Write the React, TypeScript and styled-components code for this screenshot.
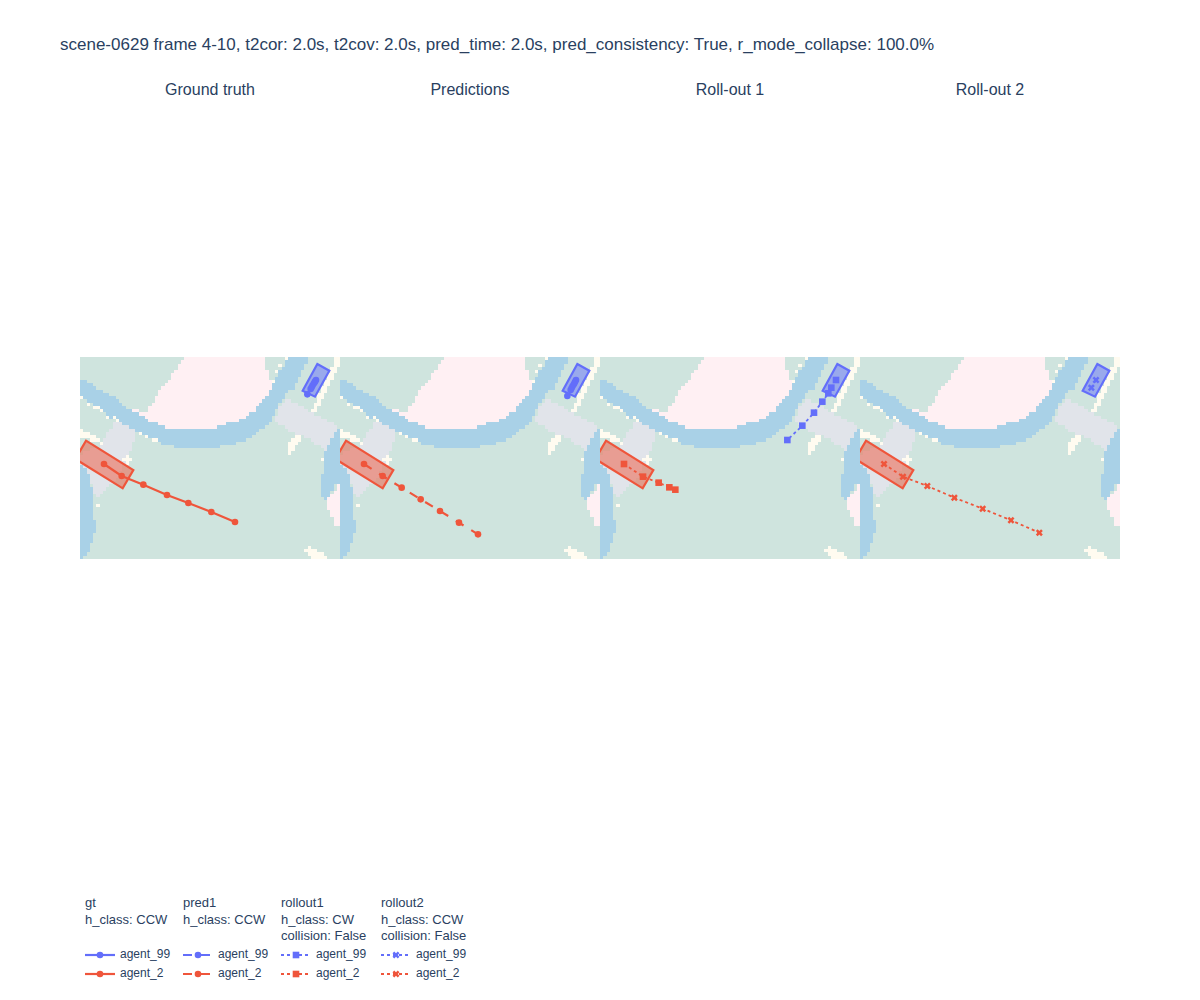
import React from 'react';
import styled, { createGlobalStyle } from 'styled-components';

type Pt = [number, number];
type Marker = 'circle' | 'square' | 'x';
type Dash = 'solid' | 'dash' | 'dot';

const BLUE = '#636efa';
const RED = '#ef553b';
const CREAM = '#fffbf0';

const GlobalStyle = createGlobalStyle`
  body {
    margin: 0;
    background: #ffffff;
    font-family: "Liberation Sans", Arial, sans-serif;
    color: #2a3f5f;
  }
`;

const Page = styled('div')`
  width: 1200px;
  height: 1000px;
  overflow: hidden;
  padding-top: 35px;
  box-sizing: border-box;
`;

const Title = styled('div')`
  font-size: 17px;
  line-height: 20px;
  padding-left: 60px;
  white-space: nowrap;
`;

const Plots = styled('div')`
  display: grid;
  grid-template-columns: repeat(4, 260px);
  margin: 25px 0 0 80px;
`;

const Panel = styled('div')`
  display: flex;
  flex-direction: column;
  align-items: center;
`;

const PanelLabel = styled('div')`
  font-size: 16px;
  line-height: 20px;
  margin-bottom: 257px;
`;

const MapSvg = styled('svg')`
  display: block;
  width: 260px;
  height: 202px;
  overflow: hidden;
`;

const Legend = styled('div')`
  display: flex;
  margin: 336px 0 0 85px;
  font-size: 13px;
  line-height: 16.5px;
`;

const Group = styled('div')<{ $width: number }>`
  width: ${(p) => p.$width}px;
  flex: none;
`;

const GroupHead = styled('div')`
  height: 50px;
`;

const Item = styled('div')`
  display: flex;
  align-items: center;
  gap: 5px;
  height: 19px;
  font-size: 12px;
  white-space: nowrap;
`;

const Swatch = styled('svg')`
  display: block;
  width: 30px;
  height: 12px;
  flex: none;
`;

// map shapes, in reference crop units (3x, top of the map at y=21)
const riverTop: Pt[] = [[-10, 85], [30, 100], [60, 120], [100, 140], [150, 180], [165, 185], [180, 195], [198, 205], [212, 215], [235, 220], [250, 230], [275, 237], [320, 240], [370, 237], [420, 230], [445, 220], [485, 210], [500, 195], [520, 185], [535, 165], [560, 140], [572, 112]];
const pink: Pt[] = [[318, 0], [553, 0], [560, 60], [575, 100], ...riverTop.slice(4).reverse(), [198, 185], [225, 150], [240, 120], [270, 85], [300, 40], [312, 22]];
const pinkRight: Pt[] = [[800, 400], [780, 400], [745, 445], [742, 475], [765, 525], [780, 535], [800, 540]];
const river: Pt[] = [...riverTop, [585, 92], [605, 55], [625, 15], [628, 0], [692, 0], [660, 80], [638, 115], [620, 130], [595, 165], [582, 195], [565, 220], [535, 245], [500, 270], [470, 280], [405, 292], [290, 292], [250, 282], [220, 270], [190, 255], [150, 235], [115, 215], [80, 195], [40, 165], [-10, 140]];
const riverLeft: Pt[] = [[-10, 335], [18, 350], [28, 385], [42, 440], [45, 550], [30, 595], [10, 630], [-10, 630]];
const riverRight: Pt[] = [[800, 225], [780, 235], [765, 250], [745, 290], [730, 320], [728, 375], [718, 375], [718, 410], [732, 462], [745, 440], [765, 405], [800, 398]];
const grayRight: Pt[] = [[615, 145], [775, 228], [738, 305], [690, 270], [645, 250], [580, 215], [600, 170]];
const grayLeft: Pt[] = [[105, 208], [170, 245], [160, 280], [125, 360], [110, 385], [80, 415], [50, 442], [42, 430], [30, 390], [15, 355], [-10, 320], [65, 285]];
const creamTop: Pt[] = [[765, 22], [782, 22], [782, 42], [722, 155], [702, 192], [690, 190], [720, 125], [750, 65]];
const creamMid: Pt[] = [[645, 255], [660, 255], [660, 270], [645, 295], [635, 310], [625, 318], [618, 305], [628, 280]];
const creamLeft: Pt[] = [[-10, 232], [55, 262], [70, 282], [40, 275], [-10, 255]];
const creamBottom: Pt[] = [[675, 595], [688, 590], [740, 615], [740, 625], [700, 625], [675, 605]];
const creamEdge: Pt[] = [[-10, 468], [3, 468], [3, 525], [-10, 525]];

const creamSpots: Pt[] = [[5, 145], [28, 162], [42, 170], [50, 175], [65, 183], [85, 198], [100, 203], [113, 210], [185, 252], [200, 260], [215, 268], [228, 273], [615, 30], [601, 50], [591, 65], [581, 93], [50, 470], [728, 330], [143, 327], [133, 327], [153, 327], [143, 317], [143, 337]];

const layers: { color: string; polys: Pt[][] }[] = [
  { color: '#fff0f3', polys: [pink, pinkRight] },
  { color: '#a9d1e7', polys: [river, riverLeft, riverRight] },
  { color: '#e1e4ea', polys: [grayRight, grayLeft] },
  { color: CREAM, polys: [creamTop, creamMid, creamLeft, creamBottom, creamEdge] },
];

const COLS = 80;
const ROWS = 62;
const CW = 260 / COLS;
const CH = 202 / ROWS;

function inPoly(x: number, y: number, poly: Pt[]) {
  let inside = false;
  for (let i = 0, j = poly.length - 1; i < poly.length; j = i++) {
    const [xi, yi] = poly[i];
    const [xj, yj] = poly[j];
    if (yi > y !== yj > y && x < ((xj - xi) * (y - yi)) / (yj - yi) + xi) inside = !inside;
  }
  return inside;
}

// rasterize the shapes into heatmap cells, one path per colour
function buildMap() {
  const paths: Record<string, string> = {};
  const spotCells = new Set(creamSpots.map(([x, y]) => `${Math.floor(x / 3 / CW)},${Math.floor((y / 3 - 7) / CH)}`));
  for (let r = 0; r < ROWS; r++) {
    let run = -1;
    let runColor = '';
    for (let c = 0; c <= COLS; c++) {
      let color = '';
      if (c < COLS) {
        const x = (c + 0.5) * CW * 3;
        const y = ((r + 0.5) * CH + 7) * 3;
        for (const layer of layers) {
          if (layer.polys.some((p) => inPoly(x, y, p))) color = layer.color;
        }
        if (spotCells.has(`${c},${r}`)) color = CREAM;
      }
      if (color !== runColor) {
        if (runColor) {
          paths[runColor] = (paths[runColor] || '') + `M${(run * CW).toFixed(2)},${(r * CH).toFixed(2)}H${(c * CW).toFixed(2)}V${((r + 1) * CH).toFixed(2)}H${(run * CW).toFixed(2)}Z`;
        }
        run = c;
        runColor = color;
      }
    }
  }
  return paths;
}

const mapPaths = buildMap();

const toLocal = (pts: Pt[]): Pt[] => pts.map(([x, y]) => [x / 3, y / 3 - 7]);
const asPoints = (pts: Pt[]) => pts.map((p) => p.join(',')).join(' ');

const MarkerShape: React.FC<{ at: Pt; kind: Marker; color: string }> = ({ at, kind, color }) => {
  const [x, y] = at;
  if (kind === 'circle') return <circle cx={x} cy={y} r={3.3} fill={color} />;
  if (kind === 'square') return <rect x={x - 3.3} y={y - 3.3} width={6.6} height={6.6} fill={color} />;
  const k = 1.75;
  const d = `M${x},${y + k}l${k},${k}l${k},-${k}l-${k},-${k}l${k},-${k}l-${k},-${k}l-${k},${k}l-${k},-${k}l-${k},${k}l${k},${k}l-${k},${k}l${k},${k}Z`;
  return <path d={d} fill={color} />;
};

const dashes: Record<Dash, string | undefined> = { solid: undefined, dash: '9,9', dot: '3,3' };
const widths: Record<Dash, number> = { solid: 2.2, dash: 2.2, dot: 1.8 };

const Track: React.FC<{ pts: Pt[]; dash: Dash; marker: Marker; color: string }> = ({ pts, dash, marker, color }) => (
  <g>
    <polyline points={asPoints(pts)} fill="none" stroke={color} strokeWidth={widths[dash]} strokeDasharray={dashes[dash]} />
    {pts.map((p, i) => (
      <MarkerShape key={i} at={p} kind={marker} color={color} />
    ))}
  </g>
);

const redBox: Pt[] = [[18, 272], [160, 360], [128, 415], [-14, 327]];
const blueBox: Pt[] = [[712, 42], [748, 62], [705, 140], [668, 122]];

interface Plot {
  label: string;
  dash: Dash;
  marker: Marker;
  red: Pt[];
  blue: Pt[];
}

const plots: Plot[] = [
  {
    label: 'Ground truth',
    dash: 'solid',
    marker: 'circle',
    red: [[72, 342], [125, 378], [190, 404], [261, 435], [325, 459], [394, 486], [465, 516]],
    blue: [[708, 90], [705, 95], [702, 100], [698, 106], [695, 112], [692, 117], [682, 133]],
  },
  {
    label: 'Predictions',
    dash: 'dash',
    marker: 'circle',
    red: [[72, 342], [128, 378], [185, 413], [242, 448], [300, 483], [357, 518], [414, 553]],
    blue: [[708, 90], [705, 96], [702, 102], [698, 108], [695, 114], [692, 120], [682, 138]],
  },
  {
    label: 'Roll-out 1',
    dash: 'dot',
    marker: 'square',
    red: [[72, 342], [129, 380], [176, 398], [208, 412], [226, 419]],
    blue: [[708, 90], [694, 113], [685, 130], [667, 155], [642, 188], [607, 227], [562, 270]],
  },
  {
    label: 'Roll-out 2',
    dash: 'dot',
    marker: 'x',
    red: [[72, 342], [129, 380], [202, 408], [283, 443], [368, 476], [453, 511], [538, 548]],
    blue: [[708, 90], [694, 113]],
  },
];

const MapPlot: React.FC<{ plot: Plot }> = ({ plot }) => (
  <MapSvg viewBox="0 0 260 202">
    <rect width={260} height={202} fill="#cfe4de" />
    {Object.entries(mapPaths).map(([color, d]) => (
      <path key={color} d={d} fill={color} shapeRendering="crispEdges" />
    ))}
    <polygon points={asPoints(toLocal(redBox))} fill={RED} fillOpacity={0.5} stroke={RED} strokeWidth={2.2} />
    <polygon points={asPoints(toLocal(blueBox))} fill={BLUE} fillOpacity={0.5} stroke={BLUE} strokeWidth={2.2} />
    <Track pts={toLocal(plot.blue)} dash={plot.dash} marker={plot.marker} color={BLUE} />
    <Track pts={toLocal(plot.red)} dash={plot.dash} marker={plot.marker} color={RED} />
  </MapSvg>
);

const LegendSwatch: React.FC<{ dash: Dash; marker: Marker; color: string }> = ({ dash, marker, color }) => (
  <Swatch viewBox="0 0 30 12">
    <line x1={0} y1={6} x2={30} y2={6} stroke={color} strokeWidth={widths[dash]} strokeDasharray={dashes[dash]} />
    <MarkerShape at={[15, 6]} kind={marker} color={color} />
  </Swatch>
);

const groups: { width: number; head: string[]; dash: Dash; marker: Marker }[] = [
  { width: 98, head: ['gt', 'h_class: CCW'], dash: 'solid', marker: 'circle' },
  { width: 98, head: ['pred1', 'h_class: CCW'], dash: 'dash', marker: 'circle' },
  { width: 100, head: ['rollout1', 'h_class: CW', 'collision: False'], dash: 'dot', marker: 'square' },
  { width: 100, head: ['rollout2', 'h_class: CCW', 'collision: False'], dash: 'dot', marker: 'x' },
];

const App: React.FC = () => (
  <Page>
    <GlobalStyle />
    <Title>
      scene-0629 frame 4-10, t2cor: 2.0s, t2cov: 2.0s, pred_time: 2.0s, pred_consistency: True, r_mode_collapse: 100.0%
    </Title>
    <Plots>
      {plots.map((plot) => (
        <Panel key={plot.label}>
          <PanelLabel>{plot.label}</PanelLabel>
          <MapPlot plot={plot} />
        </Panel>
      ))}
    </Plots>
    <Legend>
      {groups.map((g) => (
        <Group key={g.head[0]} $width={g.width}>
          <GroupHead>
            {g.head.map((line) => (
              <div key={line}>{line}</div>
            ))}
          </GroupHead>
          <Item>
            <LegendSwatch dash={g.dash} marker={g.marker} color={BLUE} />
            agent_99
          </Item>
          <Item>
            <LegendSwatch dash={g.dash} marker={g.marker} color={RED} />
            agent_2
          </Item>
        </Group>
      ))}
    </Legend>
  </Page>
);

export default App;
